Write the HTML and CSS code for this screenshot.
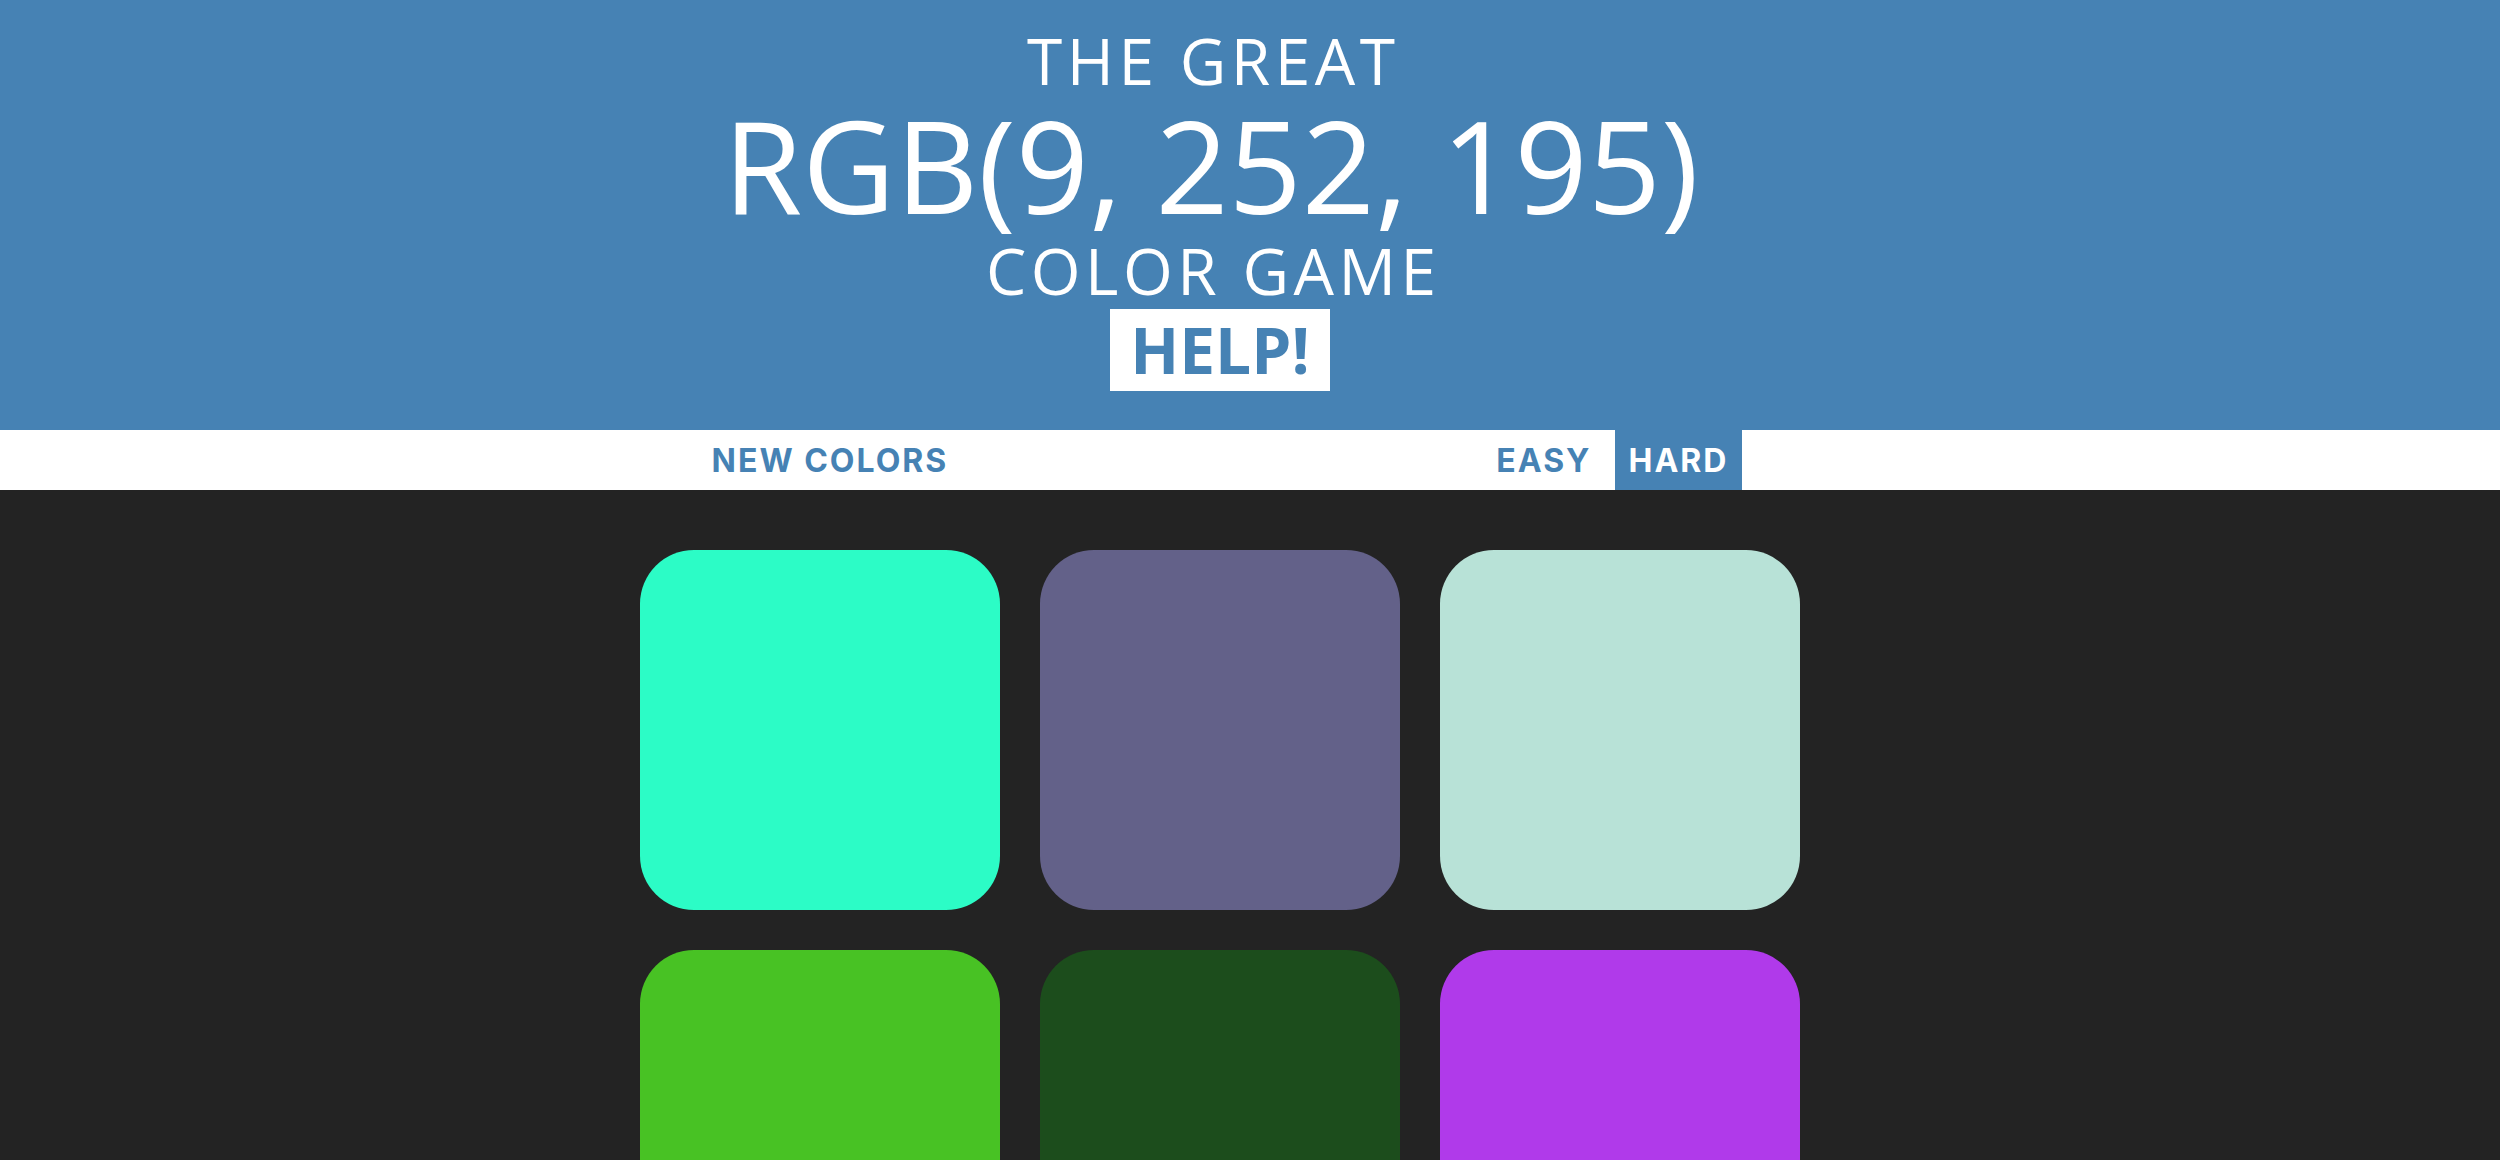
FILE: index.html
```html
<!DOCTYPE html>
<html lang="en">
<head>
<meta charset="utf-8">
<title>The Great RGB Color Game</title>
<link rel="stylesheet" href="styles.css">
</head>
<body>
<h1 class="header">
  <span class="title-line title-top">The Great</span>
  <span class="title-line title-color">RGB(9, 252, 195)</span>
  <span class="title-line title-bottom">Color Game</span>
  <button class="help-btn">Help!</button>
</h1>
<div class="stripe">
  <button class="stripe-btn">New Colors</button>
  <span class="message"></span>
  <button class="stripe-btn">Easy</button>
  <button class="stripe-btn selected">Hard</button>
</div>
<div class="board">
  <div class="grid">
    <div class="square" style="background: rgb(44, 252, 198);"></div>
    <div class="square" style="background: rgb(99, 97, 137);"></div>
    <div class="square" style="background: rgb(184, 226, 215);"></div>
    <div class="square" style="background: rgb(72, 194, 36);"></div>
    <div class="square" style="background: rgb(28, 77, 28);"></div>
    <div class="square" style="background: rgb(176, 58, 234);"></div>
  </div>
</div>
</body>
</html>
```

FILE: styles.css
```css
* {
  box-sizing: border-box;
}

html,
body {
  margin: 0;
  padding: 0;
}

body {
  background: #232323;
  font-family: "Open Sans", "Noto Sans", sans-serif;
}

.header {
  margin: 0;
  padding: 26px 60px 39px 0;
  background: #4682b4;
  color: #ffffff;
  font-weight: 400;
  text-transform: uppercase;
  display: flex;
  flex-direction: column;
  align-items: center;
}

.title-line {
  display: block;
  white-space: nowrap;
}

.title-top,
.title-bottom {
  font-size: 64px;
  letter-spacing: 4.5px;
  margin-right: 13.5px;
}

.title-top {
  line-height: 70px;
}

.title-color {
  font-size: 128px;
  line-height: 137px;
  letter-spacing: 0;
  margin-right: 18px;
}

.title-bottom {
  line-height: 76px;
}

.help-btn {
  display: block;
  height: 82px;
  margin: 0;
  padding: 0 20px;
  border: none;
  background: #ffffff;
  color: #4682b4;
  font-family: "Open Sans", "Noto Sans", sans-serif;
  font-weight: 700;
  font-size: 64px;
  line-height: 82px;
  text-transform: uppercase;
}

.stripe {
  height: 60px;
  background: #ffffff;
  display: flex;
  justify-content: center;
  align-items: stretch;
  gap: 9px;
  padding-right: 60px;
}

.stripe-btn {
  margin: 0;
  padding: 0 14px;
  border: none;
  background: none;
  color: #4682b4;
  font-family: "Inter", "Roboto", sans-serif;
  font-weight: 700;
  font-size: 32px;
  letter-spacing: 2px;
  text-transform: uppercase;
}

.stripe-btn.selected {
  background: #4682b4;
  color: #ffffff;
}

.message {
  display: block;
  width: 502px;
}

.board {
  padding-right: 60px;
}

.grid {
  max-width: 1200px;
  margin: 40px auto 0;
  padding: 20px;
  display: grid;
  grid-template-columns: repeat(3, 360px);
  grid-auto-rows: 360px;
  gap: 40px;
}

.square {
  border-radius: 15%;
}
```
